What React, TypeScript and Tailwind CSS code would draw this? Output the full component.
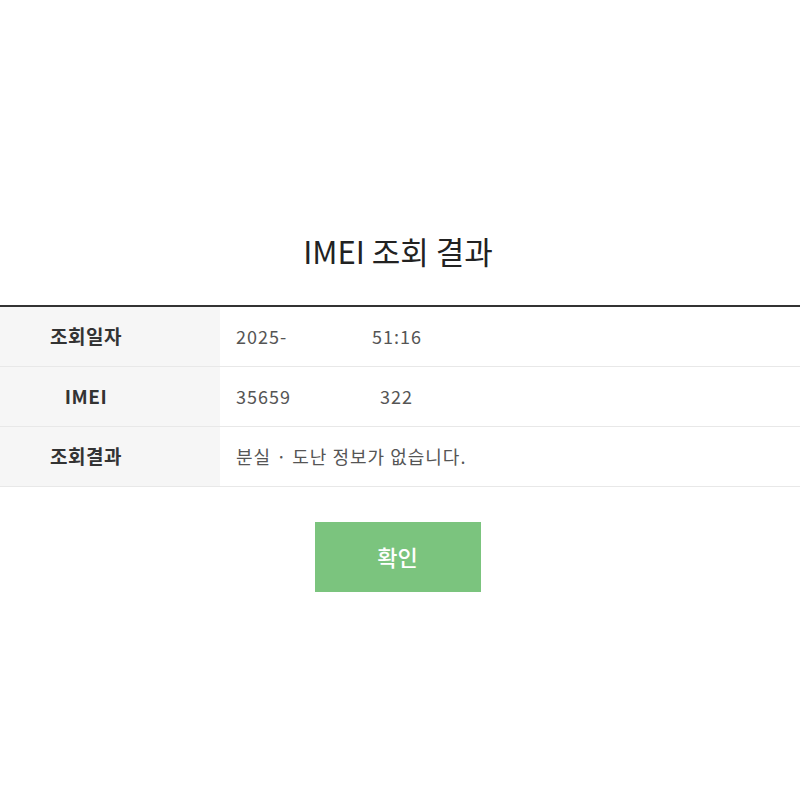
export default function App() {
  const rows = [
    { label: '조회일자', value: ['2025-', '51:16'], gap: 'w-[136px]' },
    { label: 'IMEI', value: ['35659', '322'], gap: 'w-[144px]' },
    { label: '조회결과', value: ['분실 · 도난 정보가 없습니다.'], gap: '' },
  ]

  return (
    <div className="w-[800px] h-[800px] bg-white text-[#333] font-['Noto_Sans_CJK_KR','Noto_Sans',sans-serif] overflow-hidden">
      <div className="pt-[227px]">
        <h1 className="text-center text-[31px] leading-[48px] text-[#222] pr-[4px]">IMEI 조회 결과</h1>

        <table className="mt-[30px] w-full border-collapse border-t-2 border-[#333]">
          <tbody>
            {rows.map(row => (
              <tr key={row.label} className="h-[60px] border-b border-[#e8e8e8]">
                <th className="w-[220px] pr-[48px] bg-[#f6f6f6] text-[19px] font-bold text-[#333] text-center tracking-[0.5px]">{row.label}</th>
                <td className="pl-[16px] text-[18px] text-[#555] tracking-[1px]">
                  {row.value.length > 1 ? (
                    <span className="flex">
                      <span className={`${row.gap} overflow-hidden whitespace-nowrap`}>{row.value[0]}</span>
                      <span>{row.value[1]}</span>
                    </span>
                  ) : (
                    row.value[0]
                  )}
                </td>
              </tr>
            ))}
          </tbody>
        </table>

        <div className="flex justify-center mt-[35px] pr-[5px]">
          <button className="w-[166px] h-[70px] bg-[#7bc47e] text-white text-[22px] font-medium">확인</button>
        </div>
      </div>
    </div>
  )
}
